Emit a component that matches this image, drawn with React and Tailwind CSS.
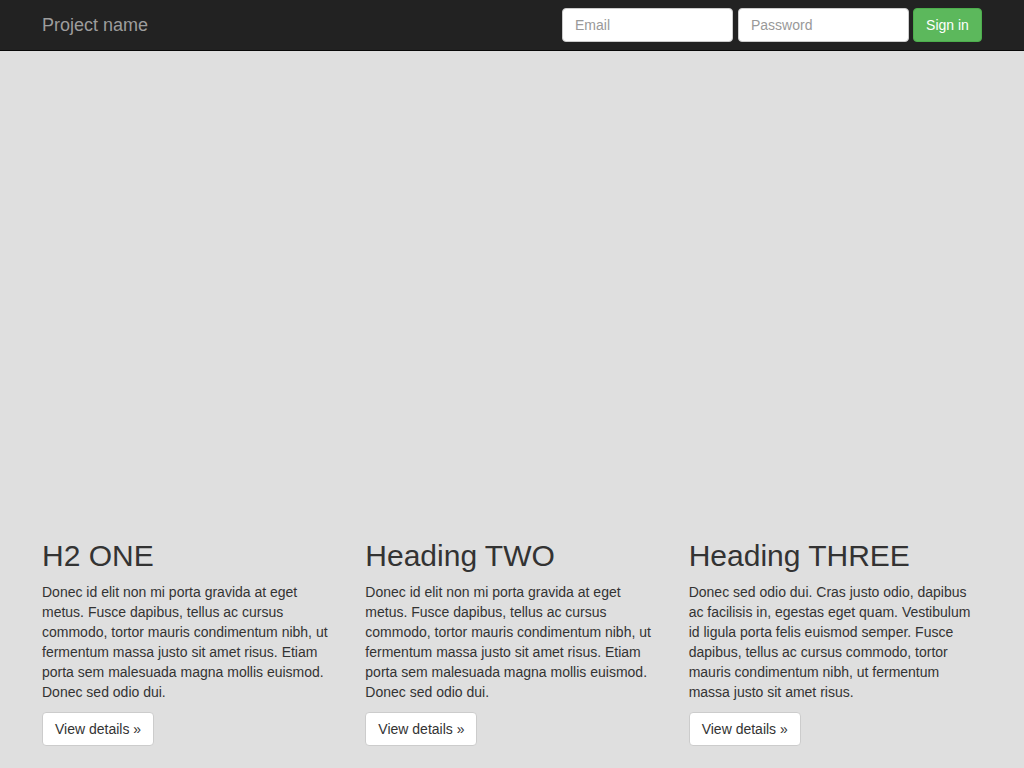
export default function App() {
  const cols = [
    {
      h: "H2 ONE",
      p: "Donec id elit non mi porta gravida at eget metus. Fusce dapibus, tellus ac cursus commodo, tortor mauris condimentum nibh, ut fermentum massa justo sit amet risus. Etiam porta sem malesuada magna mollis euismod. Donec sed odio dui.",
    },
    {
      h: "Heading TWO",
      p: "Donec id elit non mi porta gravida at eget metus. Fusce dapibus, tellus ac cursus commodo, tortor mauris condimentum nibh, ut fermentum massa justo sit amet risus. Etiam porta sem malesuada magna mollis euismod. Donec sed odio dui.",
    },
    {
      h: "Heading THREE",
      p: "Donec sed odio dui. Cras justo odio, dapibus ac facilisis in, egestas eget quam. Vestibulum id ligula porta felis euismod semper. Fusce dapibus, tellus ac cursus commodo, tortor mauris condimentum nibh, ut fermentum massa justo sit amet risus.",
    },
  ];
  return (
    <div
      className="min-h-[768px] bg-[#dfdfdf] text-[#333] text-[14px] leading-[20px]"
      style={{ fontFamily: '"Liberation Sans", Arial, sans-serif' }}
    >
      <nav className="h-[51px] bg-[#222] border-b border-[#080808]">
        <div className="w-[970px] mx-auto px-[15px] flex items-center justify-between h-[50px]">
          <span className="text-[18px] leading-[20px] text-[#9d9d9d]">Project name</span>
          <div className="flex items-center gap-[5px]">
            <input
              placeholder="Email"
              className="w-[171px] h-[34px] bg-white border border-[#ccc] rounded-[4px] px-[12px] text-[14px] placeholder:text-[#999] outline-none"
            />
            <input
              placeholder="Password"
              className="w-[171px] h-[34px] bg-white border border-[#ccc] rounded-[4px] px-[12px] text-[14px] placeholder:text-[#999] outline-none"
            />
            <button className="w-[69px] h-[34px] bg-[#5cb85c] border border-[#4cae4c] rounded-[4px] text-white text-[14px] ml-[-1px]">
              Sign in
            </button>
          </div>
        </div>
      </nav>
      <div className="h-[438px] mb-[30px]" />
      <div className="w-[970px] mx-auto grid grid-cols-3">
        {cols.map((c) => (
          <div key={c.h} className="px-[15px]">
            <h2 className="text-[30px] leading-[33px] mt-[20px] mb-[10px] font-medium text-[#333]">{c.h}</h2>
            <p className="mb-[10px]">{c.p}</p>
            <button className="h-[34px] px-[12px] bg-white border border-[#ccc] rounded-[4px] text-[14px] text-[#333]">
              View details »
            </button>
          </div>
        ))}
      </div>
    </div>
  );
}
